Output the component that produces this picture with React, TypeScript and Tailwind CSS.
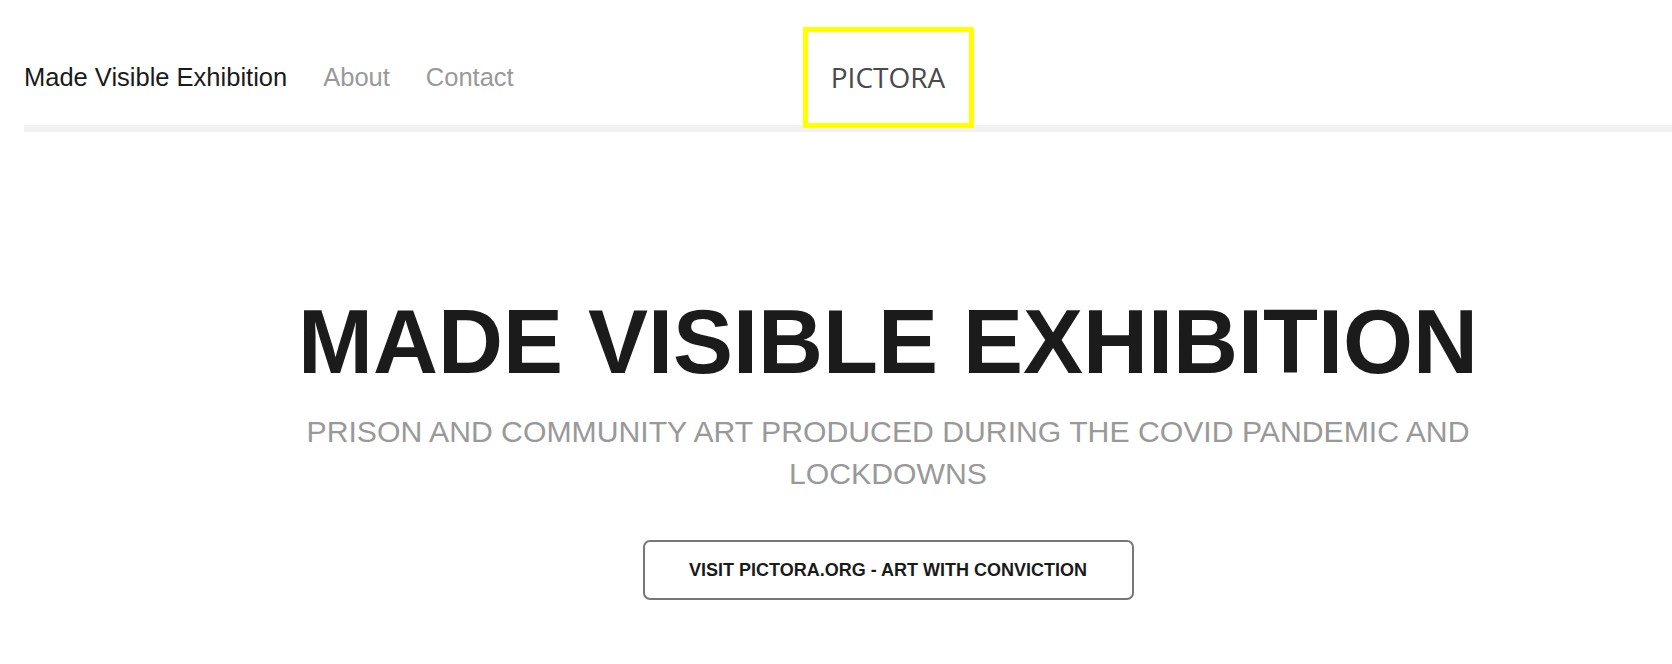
const navLinks = ["About", "Contact"]

export default function App() {
    return (
        <div className="min-h-screen bg-white font-['Liberation_Sans',Arial,sans-serif]">
            <header className="grid pt-[27px]">
                <nav className="col-start-1 row-start-1 flex items-center gap-[36px] pl-[24px] pt-[2px] text-[25.5px]">
                    <a href="#" className="text-[#1a1a1a]">Made Visible Exhibition</a>
                    {navLinks.map((link) => (
                        <a key={link} href="#" className="text-[#999999]">{link}</a>
                    ))}
                </nav>
                <div className="col-start-1 row-start-1 flex justify-center pl-[104px]">
                    <div className="relative z-10 -mb-[3px] flex h-[101px] w-[171px] items-center justify-center border-[5px] border-[#ffff00] bg-white">
                        <span className="pb-[1px] font-['Open_Sans',sans-serif] text-[28px] text-[#4a4a4a]">PICTORA</span>
                    </div>
                </div>
            </header>
            <div className="ml-[24px] h-[7px] bg-[#f2f2f2]" />

            <main className="flex flex-col items-center pl-[104px] pt-[165px] pb-16 text-center">
                <h1 className="text-[90px] font-bold leading-[90px] text-[#1b1b1b]">MADE VISIBLE EXHIBITION</h1>
                <p className="mt-[24px] max-w-[1180px] text-[30.2px] leading-[42px] text-[#999999]">
                    PRISON AND COMMUNITY ART PRODUCED DURING THE COVID PANDEMIC AND LOCKDOWNS
                </p>
                <a href="#" className="mt-[45px] flex h-[60px] w-[491px] items-center justify-center rounded-[7px] border-2 border-[#777777] text-[18px] font-bold text-[#1a1a1a]">
                    VISIT PICTORA.ORG - ART WITH CONVICTION
                </a>
            </main>
        </div>
    )
}
